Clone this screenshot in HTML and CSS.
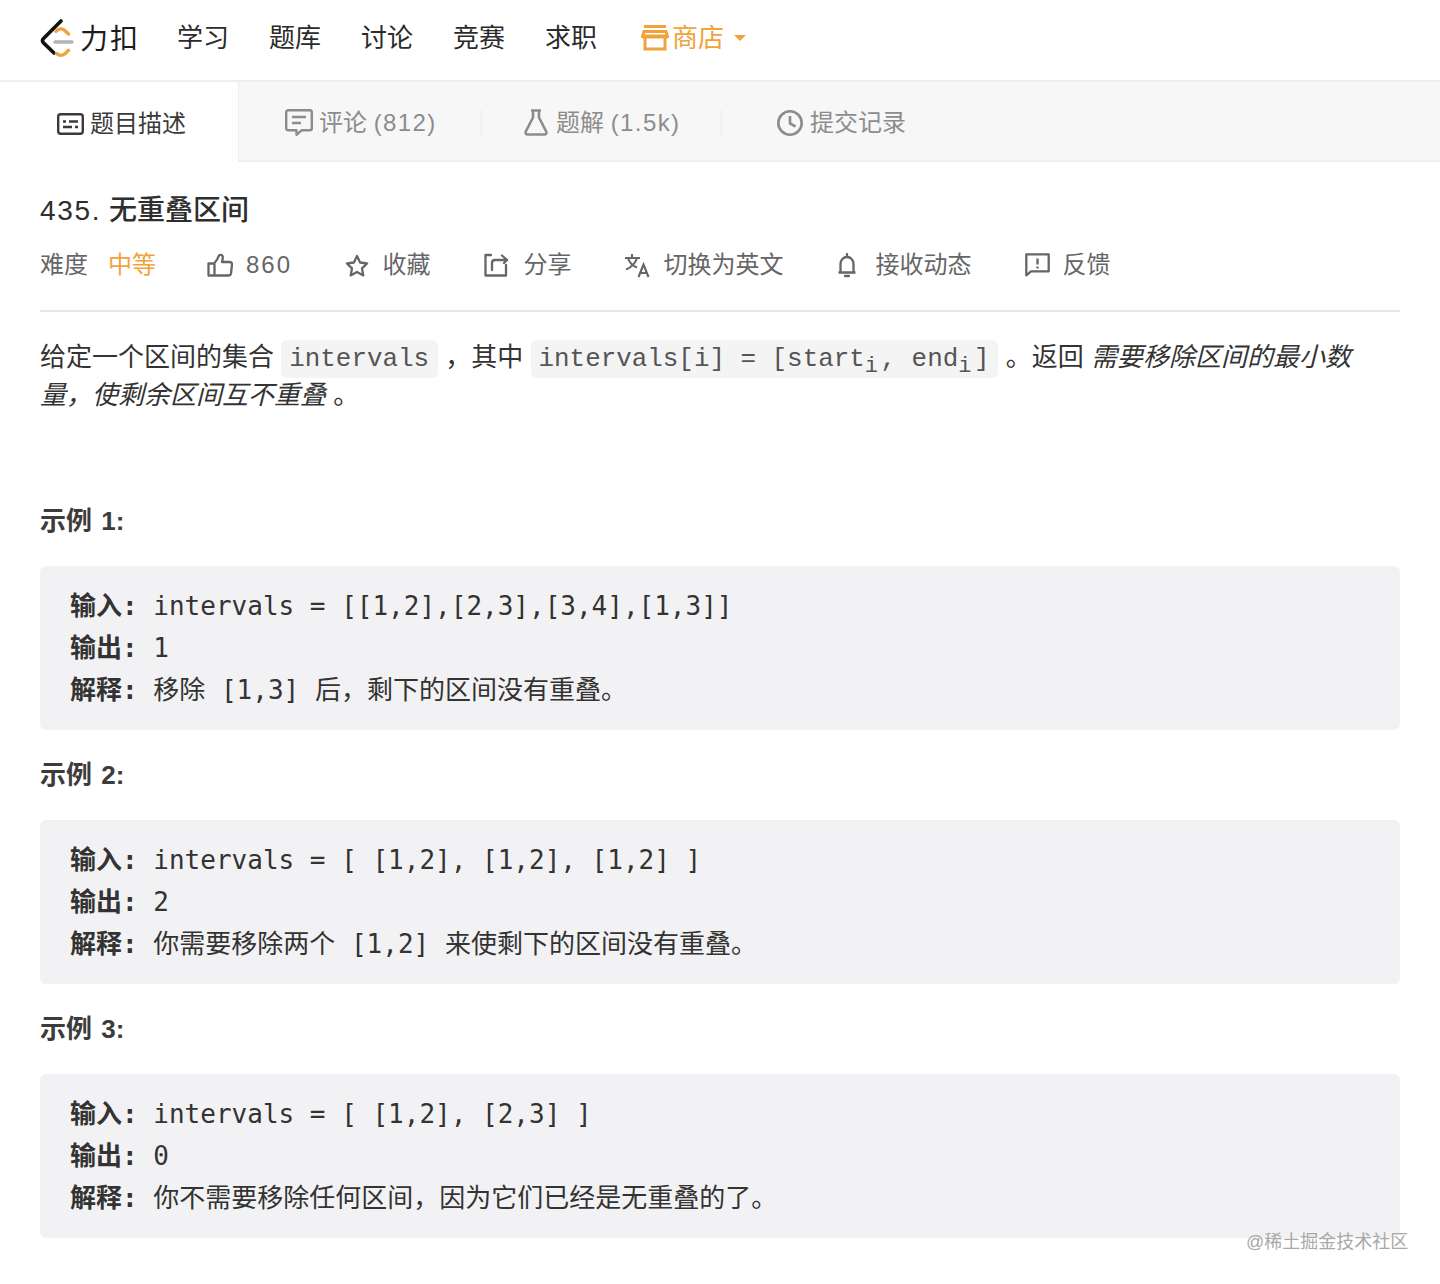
FILE: index.html
```html
<!DOCTYPE html>
<html lang="zh-CN">
<head>
<meta charset="utf-8">
<title>435. 无重叠区间</title>
<link rel="stylesheet" href="styles.css">
</head>
<body>
<header class="nav">
  <a class="logo">
    <svg class="logo-mark" width="34" height="40" viewBox="0 0 34 40" fill="none" stroke-linecap="round" stroke-linejoin="round">
      <path d="M21 3 3.5 20.5c-1.3 1.4-1.3 3 0 4.4L14 35" stroke="#111" stroke-width="3.6"/>
      <path d="M16 13.2c3-3 6.500-2.800 9 -.4l3.500 3.200M16.500 35.500c3 2.500 6.500 2.300 9-.2l3-3" stroke="#f0a33c" stroke-width="3.400"/>
      <path d="M15 24h17" stroke="#b3b3b3" stroke-width="3.400"/>
    </svg>
    <span class="logo-text">力扣</span>
  </a>
  <a class="nav-item nav-first">学习</a>
  <a class="nav-item">题库</a>
  <a class="nav-item">讨论</a>
  <a class="nav-item">竞赛</a>
  <a class="nav-item">求职</a>
  <a class="nav-item nav-shop">
    <svg width="28" height="26" viewBox="0 0 28 26" fill="none" stroke="#f0a33c" stroke-width="3">
      <path d="M3 1.500h22M1.500 11.500 3 6.500h22l1.500 5zM4 11.500v12.500h20v-12.500"/>
      <path d="M1.500 11.500h25" stroke-width="4"/>
    </svg>
    <span>商店</span>
    <i class="caret"></i>
  </a>
</header>

<nav class="tabs">
  <a class="tab tab-active">
    <svg width="27" height="22" viewBox="0 0 27 22" fill="none" stroke="#3a3a3a" stroke-width="2.400">
      <rect x="1.200" y="1.200" width="24.600" height="19.600" rx="2.500"/>
      <path d="M6 8.500h3M12 8.500h9M6 14h9M18 14h3"/>
    </svg>
    <span>题目描述</span>
  </a>
  <a class="tab tab-comments">
    <svg width="28" height="27" viewBox="0 0 28 27" fill="none" stroke="#8c8c8c" stroke-width="2.400" stroke-linejoin="round">
      <path d="M3.200 1.300h21.600a2 2 0 0 1 2 2v16a2 2 0 0 1-2 2H16.500l-5 4.500v-4.500H3.200a2 2 0 0 1-2-2v-16a2 2 0 0 1 2-2z"/>
      <path d="M7 8h14M7 14h9"/>
    </svg>
    <span>评论 <span class="tab-num">(812)</span></span>
  </a>
  <i class="tab-sep"></i>
  <a class="tab tab-solutions">
    <svg width="24" height="27" viewBox="0 0 24 27" fill="none" stroke="#8c8c8c" stroke-width="2.600" stroke-linejoin="round">
      <path d="M7 1.500h10M9 1.500v7L1.800 22.500c-.8 1.600.2 3 1.800 3h16.800c1.600 0 2.600-1.400 1.800-3L15 8.500v-7"/>
    </svg>
    <span>题解 <span class="tab-num">(1.5k)</span></span>
  </a>
  <i class="tab-sep"></i>
  <a class="tab tab-submissions">
    <svg width="26" height="26" viewBox="0 0 26 26" fill="none" stroke="#8c8c8c" stroke-width="2.600">
      <circle cx="13" cy="13" r="11.700"/>
      <path d="M13 6v7.500l5.500 3"/>
    </svg>
    <span>提交记录</span>
  </a>
</nav>

<main class="content">
  <h1 class="title"><span class="title-num">435.</span> 无重叠区间</h1>
  <div class="meta">
    <span class="meta-item meta-difficulty">难度<b class="medium">中等</b></span>
    <span class="meta-item meta-likes">
      <svg width="26" height="24" viewBox="0 0 26 24" fill="none" stroke="#666" stroke-width="2.300" stroke-linejoin="round">
        <path d="M7.500 10.500h-6v12h20c1.300 0 2.200-.8 2.500-2l1-9c.1-1.500-.9-2.500-2.500-2.500h-7.500c.6-2 .9-3.700.7-5.500-.2-1.700-3.200-2.300-4-.5-1 3.500-2.700 5.500-4.700 7.500zM7.500 10.500v12"/>
      </svg>
      <span class="count">860</span>
    </span>
    <span class="meta-item meta-star">
      <svg width="24" height="23" viewBox="0 0 24 23" fill="none" stroke="#666" stroke-width="2.300" stroke-linejoin="round">
        <path d="m12 2 3.100 6.500 7 1-5.100 4.900 1.300 7L12 18l-6.300 3.400 1.300-7L1.900 9.500l7-1z"/>
      </svg>
      <span>收藏</span>
    </span>
    <span class="meta-item meta-share">
      <svg width="26" height="24" viewBox="0 0 26 24" fill="none" stroke="#666" stroke-width="2.300" stroke-linejoin="round" stroke-linecap="round">
        <path d="M8 2H2.500v20.500h20.500V12M9 17v-7c0-2 1-3 3-3h12"/>
        <path d="m19 2.500 5 4.500-3 3"/>
      </svg>
      <span>分享</span>
    </span>
    <span class="meta-item meta-lang">
      <svg width="26" height="26" viewBox="0 0 26 26" fill="none" stroke="#666" stroke-width="2.100">
        <path d="M1 6h15M8 2v4M13 6c-1.500 5-5 9-11 11.500M4 6c1.500 4.500 5 8 9 9.500"/>
        <path d="m14.500 25 5-12.500 5 12.500M16.200 21h6.600"/>
      </svg>
      <span>切换为英文</span>
    </span>
    <span class="meta-item meta-bell">
      <svg width="22" height="25" viewBox="0 0 22 25" fill="none" stroke="#666" stroke-width="2.300" stroke-linejoin="round">
        <path d="M2.500 19.500h17M4.500 19.500V11c0-4 2.800-7 6.500-7s6.500 3 6.500 7v8.500"/>
        <path d="M11 1v3M9 23h4" stroke-linecap="round"/>
      </svg>
      <span>接收动态</span>
    </span>
    <span class="meta-item meta-feedback">
      <svg width="25" height="24" viewBox="0 0 25 24" fill="none" stroke="#666" stroke-width="2.300" stroke-linejoin="round">
        <path d="M1.300 1.300h22.400v17H6l-4.700 4z"/>
        <path d="M12.500 5.500v6M12.500 13.500v2"/>
      </svg>
      <span>反馈</span>
    </span>
  </div>

  <div class="rule"></div>

  <p class="desc">给定一个区间的集合 <code>intervals</code> ，其中 <code>intervals[i] = [start<sub>i</sub>, end<sub>i</sub>]</code> 。返回 <em>需要移除区间的最小数量，使剩余区间互不重叠</em> 。</p>

  <p class="example-title example-first">示例 1:</p>
  <pre class="example"><strong>输入:</strong> intervals = [[1,2],[2,3],[3,4],[1,3]]
<strong>输出:</strong> 1
<strong>解释:</strong> 移除 [1,3] 后，剩下的区间没有重叠。</pre>

  <p class="example-title">示例 2:</p>
  <pre class="example"><strong>输入:</strong> intervals = [ [1,2], [1,2], [1,2] ]
<strong>输出:</strong> 2
<strong>解释:</strong> 你需要移除两个 [1,2] 来使剩下的区间没有重叠。</pre>

  <p class="example-title">示例 3:</p>
  <pre class="example"><strong>输入:</strong> intervals = [ [1,2], [2,3] ]
<strong>输出:</strong> 0
<strong>解释:</strong> 你不需要移除任何区间，因为它们已经是无重叠的了。</pre>
</main>

<div class="watermark">@稀土掘金技术社区</div>
</body>
</html>
```
FILE: styles.css
```css
* { box-sizing: border-box; }
html, body { margin: 0; padding: 0; }
body {
  position: relative;
  height: 1284px;
  overflow: hidden;
  background: #fff;
  color: #3a3a3a;
  font-family: "Liberation Sans", "Noto Sans CJK SC", sans-serif;
}
a { color: inherit; text-decoration: none; }
svg { display: block; flex: none; }

.nav {
  display: flex;
  align-items: center;
  height: 82px;
  padding: 0 0 4px 40px;
  border-bottom: 2px solid #eeeeee;
  color: #2b2b2b;
  font-size: 26px;
  line-height: 36px;
}
.logo { display: flex; align-items: center; }
.logo-text { margin-left: 6px; padding-top: 4px; font-size: 28px; letter-spacing: 2px; color: #1c1c1c; }
.nav-item { margin-left: 40px; }
.nav-first { margin-left: 37px; }
.nav-shop {
  display: flex;
  align-items: center;
  margin-left: 44px;
  color: #f0a33c;
}
.nav-shop span { margin-left: 3px; }
.caret {
  margin-left: 10px;
  border-top: 6px solid #f0a33c;
  border-left: 6px solid transparent;
  border-right: 6px solid transparent;
}

.tabs {
  display: flex;
  align-items: center;
  height: 80px;
  background: #f7f7f8;
  border-bottom: 2px solid #eeeeee;
  color: #8c8c8c;
  font-size: 24px;
  line-height: 32px;
}
.tab {
  display: flex;
  align-items: center;
  gap: 6px;
  height: 78px;
  padding-top: 3px;
}
.tab-active {
  align-self: flex-start;
  width: 239px;
  height: 80px;
  padding-left: 57px;
  background: #fff;
  color: #3a3a3a;
  border-right: 1px solid #eeeeee;
}
.tab-comments { width: 241px; padding-left: 46px; }
.tab-solutions { width: 238px; padding-left: 42px; gap: 8px; }
.tab-submissions { padding-left: 55px; gap: 7px; }
.tab-num { letter-spacing: 1.400px; }
.tab-sep { flex: none; width: 2px; height: 26px; margin-top: 3px; background: #f1f1f2; }

.content { padding: 0 40px; }
.title {
  margin: 29px 0 0;
  font-size: 28px;
  font-weight: 500;
  line-height: 40px;
  color: #2e2e2e;
}
.title-num { letter-spacing: 1.700px; }
.meta {
  display: flex;
  align-items: center;
  margin-top: 14px;
  height: 40px;
  color: #666;
  font-size: 24px;
  line-height: 32px;
}
.meta-item { display: flex; align-items: center; gap: 14px; }
.meta-difficulty { gap: 20px; margin-right: 51px; }
.meta-likes { gap: 13px; margin-right: 52.500px; }
.meta-star { margin-right: 52px; }
.meta-share { gap: 15px; margin-right: 52px; }
.meta-lang { margin-right: 52px; }
.meta-bell { gap: 18px; margin-right: 53px; }
.meta-feedback { gap: 13px; }
.medium { font-weight: 400; color: #f0a33c; }
.count { letter-spacing: 2px; }

.rule { height: 2px; margin-top: 25px; background: #e6e6e6; }

.desc {
  margin: 26px 0 0;
  font-size: 26px;
  line-height: 38px;
  color: #333;
}
.desc code {
  padding: 4px 9px 4px 8px;
  border-radius: 6px;
  background: #f4f4f5;
  color: #555;
  font-family: "Liberation Mono", "Noto Sans CJK SC", monospace;
  font-size: 25.900px;
  line-height: 20px;
}
.desc sub { font-size: 22px; line-height: 0; letter-spacing: 2.500px; }
.desc em { font-style: italic; }

.example-title {
  margin: 26px 0 0;
  font-size: 26px;
  font-weight: 700;
  line-height: 38px;
  color: #3c3c3c;
  word-spacing: 2px;
}
.example-first { margin-top: 88px; }
.example {
  margin: 26px 0 0;
  padding: 19px 30px;
  height: 164px;
  border-radius: 6px;
  background: #f2f2f4;
  color: #333;
  font-family: "DejaVu Sans Mono", "Noto Sans CJK SC", monospace;
  font-size: 26px;
  line-height: 42px;
  white-space: pre;
}
.example strong { font-weight: 700; }

.watermark {
  position: absolute;
  left: 1246px;
  top: 1230px;
  font-size: 18px;
  line-height: 24px;
  color: #a8a8a8;
  white-space: nowrap;
}
```
